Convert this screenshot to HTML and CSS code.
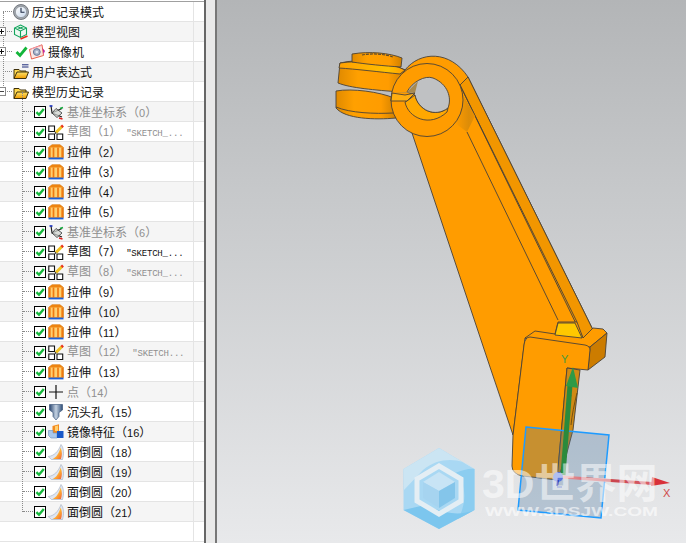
FILE: index.html
```html
<!DOCTYPE html>
<html lang="zh-CN">
<head>
<meta charset="utf-8">
<title>部件导航器</title>
<link rel="stylesheet" href="styles.css">
</head>
<body>
<svg class="defs" width="0" height="0" aria-hidden="true">
  <defs>
    <linearGradient id="gFolder" x1="0" y1="0" x2="0" y2="1"><stop offset="0" stop-color="#ffe468"/><stop offset="1" stop-color="#ee9a00"/></linearGradient>
    <linearGradient id="gHole" x1="0" y1="0" x2="1" y2="0"><stop offset="0" stop-color="#2a4670"/><stop offset=".5" stop-color="#c4d2e2"/><stop offset="1" stop-color="#2f4e78"/></linearGradient>
    <linearGradient id="gBlend" x1="0" y1="0" x2="1" y2="1"><stop offset="0" stop-color="#ffe98a"/><stop offset=".55" stop-color="#ffb030"/><stop offset="1" stop-color="#f0603a"/></linearGradient>
    <linearGradient id="gFace" x1="0" y1="0" x2="1" y2="1"><stop offset="0" stop-color="#fff"/><stop offset="1" stop-color="#c8d8ec"/></linearGradient>
    <symbol id="i-check" viewBox="0 0 12 12">
      <rect x=".5" y=".5" width="11" height="11" fill="#fff" stroke="#000"/>
      <path d="M2.400 6.200 5 8.800 9.800 3" fill="none" stroke="#16b83c" stroke-width="2.400"/>
    </symbol>
    <symbol id="i-clock" viewBox="0 0 16 16">
      <circle cx="8" cy="8" r="7.500" fill="#a4a9b0" stroke="#5d6268" stroke-width=".8"/>
      <circle cx="8" cy="8" r="5.600" fill="url(#gFace)" stroke="#7d848c" stroke-width=".6"/>
      <path d="M8 3.800V8.200H11.500" fill="none" stroke="#1d2a44" stroke-width="1.100"/>
    </symbol>
    <symbol id="i-view" viewBox="0 0 16 16">
      <path d="M7.500 1 13.500 4V10.500L7.500 13.500 1.500 10.500V4ZM1.500 4 7.500 7 13.500 4M7.500 7V13.500M4.500 2.500 10.500 5.500M10.500 2.500 4.500 5.500" fill="#eef9f2" stroke="#12a45c" stroke-width="1.100"/>
      <path d="M7.500 15 14.500 12" stroke="#e8301e" stroke-width="1.800"/>
    </symbol>
    <symbol id="i-tick" viewBox="0 0 13 13">
      <path d="M1.500 7 5 10.500 11.500 2.500" fill="none" stroke="#13b53a" stroke-width="2.800"/>
    </symbol>
    <symbol id="i-camera" viewBox="0 0 16 16">
      <path d="M.500 5.500 13 .800 14.500 11.500 2.500 15Z" fill="#fbe6e2" stroke="#e8604e"/>
      <path d="M2 5 12.500 1.500" stroke="#f0a0b0"/>
      <circle cx="7.800" cy="8" r="3.400" fill="#a8b2c8" stroke="#6a7898"/>
      <circle cx="7.800" cy="8" r="1.300" fill="#dfe6f0"/>
      <path d="M13.500 4 16 7 14.500 10Z" fill="#c0209a"/>
    </symbol>
    <symbol id="i-folder" viewBox="0 0 16 16">
      <path d="M1 14.500V4.500H6L7.500 6H13V8" fill="#ffd84c" stroke="#3e300a"/>
      <path d="M1 14.500 4 8H15.500L13 14.500Z" fill="url(#gFolder)" stroke="#3e300a"/>
    </symbol>
    <symbol id="i-folderx" viewBox="0 0 16 16">
      <path d="M9 .800H15.500M9 3H15.500" stroke="#1c2a7a"/>
      <path d="M1 14.500V5.500H6L7.500 7H13V8" fill="#ffd84c" stroke="#3e300a"/>
      <path d="M1 14.500 4 8H15.500L13 14.500Z" fill="url(#gFolder)" stroke="#3e300a"/>
    </symbol>
    <symbol id="i-csys" viewBox="0 0 16 16">
      <path d="M3 1.500 4 9 14 13M4 9 14 4.500" fill="none" stroke="#222" stroke-width="1.200"/>
      <path d="M4 9 8 4.500 14 9 9 13.500Z" fill="#cfd3cf" fill-opacity=".7" stroke="#333" stroke-width=".8"/>
      <path d="M1.500 2H4.500" stroke="#1830c8" stroke-width="1.500"/>
      <path d="M12 4.500 15 3.500" stroke="#14a83c" stroke-width="1.500"/>
      <path d="M11 14 14.500 15" stroke="#e0201c" stroke-width="1.500"/>
    </symbol>
    <symbol id="i-sketch" viewBox="0 0 16 16">
      <path d="M.800 2H6.500V7.500H.800ZM.800 10H6.500V15.500H.800ZM9 10H14.700V15.500H9Z" fill="#fff" stroke="#111" stroke-width="1.100"/>
      <path d="M8 8.500 14 2.500" stroke="#f0c020" stroke-width="3"/>
      <path d="M13.500 3 15 1.500" stroke="#e83020" stroke-width="2.600"/>
      <path d="M7 9.500 8 8.500" stroke="#222" stroke-width="1.500"/>
    </symbol>
    <symbol id="i-extrude" viewBox="0 0 16 16">
      <path d="M.500 3.500 4 .800H12L15.500 3.500V13.500H.500Z" fill="#ffd070" stroke="#c86400" stroke-width=".6"/>
      <path d="M.500 3.500 4 .800H12L15.500 3.500Z" fill="#ee8410"/>
      <path d="M1.800 3.500V13.500M5.500 3.500V13.500M10 3.500V13.500M14.200 3.500V13.500" stroke="#f07a10" stroke-width="1.700"/>
      <path d="M.500 14.500H15.500" stroke="#1c60d8" stroke-width="1.800"/>
    </symbol>
    <symbol id="i-point" viewBox="0 0 16 16">
      <path d="M1 8H15M8 1V15" stroke="#111" stroke-width="1.200"/>
    </symbol>
    <symbol id="i-hole" viewBox="0 0 16 16">
      <path d="M1.500 .500H14.500V6L11 8.500V12.500L8 16 5 12.500V8.500L1.500 6Z" fill="url(#gHole)" stroke="#2f4a70" stroke-width=".6"/>
    </symbol>
    <symbol id="i-mirror" viewBox="0 0 16 16">
      <path d="M4.500 2 11 .300V9H4.500Z" fill="#f48a1c"/>
      <path d="M7 2.200 10 1.400V7H7Z" fill="#ffd070"/>
      <path d="M.500 6.500H5V9H9V14H3L.500 11.500Z" fill="#a9c8ec" stroke="#6c90c0" stroke-width=".6"/>
      <path d="M9 7H15.500V14H9Z" fill="#1858c8"/>
    </symbol>
    <symbol id="i-blend" viewBox="0 0 16 16">
      <path d="M13 .500C16 4 16 10 14.500 15.500H3.500L.200 12.500C6 12 10.500 7.500 13 .500Z" fill="#dfe6f2" stroke="#a0aabc" stroke-width=".6"/>
      <path d="M12.500 3.500C14.500 8 14 11.500 13 15H4.500C8.500 13.500 11 9 12.500 3.500Z" fill="url(#gBlend)"/>
    </symbol>
  </defs>
</svg>

<div class="app">
  <aside class="tree">
    <div class="guide guide-root"></div>
    <div class="guide guide-child"></div>

    <div class="row lv0"><i class="stub"></i><svg class="ico"><use href="#i-clock"/></svg><span class="lbl">历史记录模式</span></div>
    <div class="row lv0 alt"><b class="box plus"></b><i class="stub"></i><svg class="ico"><use href="#i-view"/></svg><span class="lbl">模型视图</span></div>
    <div class="row lv0"><b class="box plus"></b><i class="stub"></i><svg class="tick"><use href="#i-tick"/></svg><svg class="ico"><use href="#i-camera"/></svg><span class="lbl">摄像机</span></div>
    <div class="row lv0 alt"><i class="stub"></i><svg class="ico"><use href="#i-folderx"/></svg><span class="lbl">用户表达式</span></div>
    <div class="row lv0"><b class="box"></b><i class="stub"></i><svg class="ico"><use href="#i-folder"/></svg><span class="lbl">模型历史记录</span></div>

    <div class="row lv1 alt off"><i class="stub"></i><svg class="chk"><use href="#i-check"/></svg><svg class="ico"><use href="#i-csys"/></svg><span class="lbl">基准坐标系（<span class="lat">0</span>）</span></div>
    <div class="row lv1 off"><i class="stub"></i><svg class="chk"><use href="#i-check"/></svg><svg class="ico"><use href="#i-sketch"/></svg><span class="lbl">草图（<span class="lat">1</span>）<span class="sk">"SKETCH_...</span></span></div>
    <div class="row lv1 alt"><i class="stub"></i><svg class="chk"><use href="#i-check"/></svg><svg class="ico"><use href="#i-extrude"/></svg><span class="lbl">拉伸（<span class="lat">2</span>）</span></div>
    <div class="row lv1"><i class="stub"></i><svg class="chk"><use href="#i-check"/></svg><svg class="ico"><use href="#i-extrude"/></svg><span class="lbl">拉伸（<span class="lat">3</span>）</span></div>
    <div class="row lv1 alt"><i class="stub"></i><svg class="chk"><use href="#i-check"/></svg><svg class="ico"><use href="#i-extrude"/></svg><span class="lbl">拉伸（<span class="lat">4</span>）</span></div>
    <div class="row lv1"><i class="stub"></i><svg class="chk"><use href="#i-check"/></svg><svg class="ico"><use href="#i-extrude"/></svg><span class="lbl">拉伸（<span class="lat">5</span>）</span></div>
    <div class="row lv1 alt off"><i class="stub"></i><svg class="chk"><use href="#i-check"/></svg><svg class="ico"><use href="#i-csys"/></svg><span class="lbl">基准坐标系（<span class="lat">6</span>）</span></div>
    <div class="row lv1"><i class="stub"></i><svg class="chk"><use href="#i-check"/></svg><svg class="ico"><use href="#i-sketch"/></svg><span class="lbl">草图（<span class="lat">7</span>）<span class="sk">"SKETCH_...</span></span></div>
    <div class="row lv1 alt off"><i class="stub"></i><svg class="chk"><use href="#i-check"/></svg><svg class="ico"><use href="#i-sketch"/></svg><span class="lbl">草图（<span class="lat">8</span>）<span class="sk">"SKETCH_...</span></span></div>
    <div class="row lv1"><i class="stub"></i><svg class="chk"><use href="#i-check"/></svg><svg class="ico"><use href="#i-extrude"/></svg><span class="lbl">拉伸（<span class="lat">9</span>）</span></div>
    <div class="row lv1 alt"><i class="stub"></i><svg class="chk"><use href="#i-check"/></svg><svg class="ico"><use href="#i-extrude"/></svg><span class="lbl">拉伸（<span class="lat">10</span>）</span></div>
    <div class="row lv1"><i class="stub"></i><svg class="chk"><use href="#i-check"/></svg><svg class="ico"><use href="#i-extrude"/></svg><span class="lbl">拉伸（<span class="lat">11</span>）</span></div>
    <div class="row lv1 alt off"><i class="stub"></i><svg class="chk"><use href="#i-check"/></svg><svg class="ico"><use href="#i-sketch"/></svg><span class="lbl">草图（<span class="lat">12</span>）<span class="sk">"SKETCH...</span></span></div>
    <div class="row lv1"><i class="stub"></i><svg class="chk"><use href="#i-check"/></svg><svg class="ico"><use href="#i-extrude"/></svg><span class="lbl">拉伸（<span class="lat">13</span>）</span></div>
    <div class="row lv1 alt off"><i class="stub"></i><svg class="chk"><use href="#i-check"/></svg><svg class="ico"><use href="#i-point"/></svg><span class="lbl">点（<span class="lat">14</span>）</span></div>
    <div class="row lv1"><i class="stub"></i><svg class="chk"><use href="#i-check"/></svg><svg class="ico"><use href="#i-hole"/></svg><span class="lbl">沉头孔（<span class="lat">15</span>）</span></div>
    <div class="row lv1 alt"><i class="stub"></i><svg class="chk"><use href="#i-check"/></svg><svg class="ico"><use href="#i-mirror"/></svg><span class="lbl">镜像特征（<span class="lat">16</span>）</span></div>
    <div class="row lv1"><i class="stub"></i><svg class="chk"><use href="#i-check"/></svg><svg class="ico"><use href="#i-blend"/></svg><span class="lbl">面倒圆（<span class="lat">18</span>）</span></div>
    <div class="row lv1 alt"><i class="stub"></i><svg class="chk"><use href="#i-check"/></svg><svg class="ico"><use href="#i-blend"/></svg><span class="lbl">面倒圆（<span class="lat">19</span>）</span></div>
    <div class="row lv1"><i class="stub"></i><svg class="chk"><use href="#i-check"/></svg><svg class="ico"><use href="#i-blend"/></svg><span class="lbl">面倒圆（<span class="lat">20</span>）</span></div>
    <div class="row lv1 alt"><i class="stub"></i><svg class="chk"><use href="#i-check"/></svg><svg class="ico"><use href="#i-blend"/></svg><span class="lbl">面倒圆（<span class="lat">21</span>）</span></div>
    <div class="row"></div>
  </aside>

  <div class="sash"></div>

  <main class="view">
    <svg class="scene" viewBox="217 0 469 543" width="469" height="543">
      <defs>
        <linearGradient id="gLug" x1="0" y1="0" x2="1" y2="0"><stop offset="0" stop-color="#e08a00"/><stop offset=".3" stop-color="#ffa000"/><stop offset=".75" stop-color="#ff9c00"/><stop offset="1" stop-color="#d08000"/></linearGradient>
        <linearGradient id="gLugTop" x1="0" y1="0" x2="1" y2="0"><stop offset="0" stop-color="#ffa000"/><stop offset=".75" stop-color="#ffc000"/><stop offset="1" stop-color="#ff9c00"/></linearGradient>
        <linearGradient id="gFillet" x1="0" y1="0" x2="1" y2="0"><stop offset="0" stop-color="#ff9c00"/><stop offset=".7" stop-color="#dc8c08"/><stop offset="1" stop-color="#ec9000"/></linearGradient>
        <linearGradient id="gShaft" x1="0" y1="0" x2="1" y2="0"><stop offset="0" stop-color="#e8a0a4"/><stop offset=".5" stop-color="#c8404a"/><stop offset="1" stop-color="#d8606a"/></linearGradient>
      </defs>

      <g stroke="#4a4238" stroke-width=".9" stroke-linejoin="round">
        <!-- lower lug -->
        <path d="M336 91C352 88 380 92 394 98L396 118C375 120 345 119 336 108Z" fill="url(#gLug)"/>
        <path d="M336 107C350 113 375 114 393 113" fill="none"/>
        <!-- upper lug -->
        <path d="M340 63C360 58 390 62 405 70L400 92C375 90 350 88 338 83Z" fill="url(#gLug)"/>
        <path d="M340 63C360 60 390 62 405 70L400 74C380 72 355 69 339 68Z" fill="url(#gLugTop)"/>
        <!-- cap -->
        <path d="M352 54C370 51 390 53 402 58L401 67C385 66 365 64 352 62Z" fill="url(#gLug)"/>
        <path d="M362 55C372 53 385 54 393 57" fill="none" stroke="#5a4a30" stroke-width="1.200" stroke-dasharray="3 1"/>

        <!-- arm -->
        <path d="M405 70C420 51 450 50 468 77L594 332 590 347 525 338 513 435 490 367 412 133 391 100Z" fill="#ff9c00"/>
        <path d="M460 85 468 77 594 332 583 338Z" fill="#f29600"/>
        <path d="M467 132 558 320" fill="none"/>
        <path d="M460 85 577 322" fill="none"/>
        <path d="M462 93 475 116 467 132 455 123Z" fill="url(#gFillet)" stroke="none"/>

        <!-- ring -->
        <ellipse cx="427" cy="100" rx="36" ry="36.500" fill="#ff9c00"/>
        <path d="M405 102C408 118 430 128 447 112L448 108C435 118 418 110 415 95L407 101Z" fill="#ffa800"/>
        <path d="M415 95C418 110 435 118 448 108C452 98 448 84 433 78C425 75 412 82 407 92Z" fill="#bfc1c3"/>
        <path d="M392 92 407 92 418 81 415 93 392 92Z" fill="#a88a50" stroke="none"/>
        <path d="M392 93 405 95 415 93 407 101 391 101Z" fill="#ffae10"/>

        <!-- bracket -->
        <path d="M535 331 555 334 558 322 577 322 583 338 593 328 603 329 607 333 590 347 525 338Z" fill="#ff9c00"/>
        <path d="M558 323 575 323 582 338 555 335Z" fill="#ffc800"/>
        <path d="M590 347 607 333 605 357 588 370Z" fill="#cc7c00"/>
        <path d="M530 337 585 345Q590 346 590 350L588 370 567 368 557 480 523 476Q512 474 512 466L513 435 524 345Q525 337 530 337Z" fill="#ff9c00"/>
        <path d="M567 368 580 370 573 430 565 460 557 480Z" fill="#d08a14"/>
        <path d="M571 395C567 410 566 425 566 440M577 393C574 405 572 415 571 425" fill="none" stroke="#6a4a10"/>
      </g>

      <!-- watermark logo -->
      <g>
        <path d="M439 448 474.500 469V510L439 529 403.500 510V469Z" fill="#a9d8f3"/>
        <path d="M403.500 469 439 448 474.500 469C462 458 440 456 423 470L404 490Z" fill="#cbe5f3"/>
        <path d="M474.500 469V510L458 519C466 505 468 485 455 473 463 470 470 468 474.500 469Z" fill="#8ccdf0"/>
        <path d="M403.500 510 439 529 474.500 510C460 516 445 514 425 505Z" fill="#7cc6ee"/>
        <path d="M439 466 461 479V501L439 514 417 501V479Z" fill="none" stroke="#e4eef4" stroke-width="5"/>
        <path d="M439 472 455 482 439 491 423 482Z" fill="#c8e4f5"/>
        <path d="M423 482 439 491V508L423 498Z" fill="#a6d4f0"/>
        <path d="M455 482 439 491V508L455 498Z" fill="#84c5ea"/>
      </g>

      <!-- datum plane -->
      <path class="plane" d="M526 427 609 435 601 518 518 510Z"/>

      <!-- triad -->
      <path d="M563 475 570 385" stroke="#2a8a3c" stroke-width="5"/>
      <path d="M573 367 578 388 566 386Z" fill="#2e9a46"/>
      <path d="M562 477 652 483.500" stroke="url(#gShaft)" stroke-width="3"/>
      <path d="M652 477 670 483 651 486Z" fill="#d8303a"/>
      <circle cx="558" cy="477" r="5" fill="#5878e0"/>
      <path d="M558 480 557 486" stroke="#1c40c0" stroke-width="2"/>
      <path d="M557 487H562" stroke="#1c40c0"/>
      <text class="axis ax-y" x="561" y="363">Y</text>
      <text class="axis ax-x" x="663" y="497">X</text>

      <!-- watermark text -->
      <text class="wm" x="482" y="498">3D世界网</text>
      <text class="wm-url" x="485" y="516" textLength="173" lengthAdjust="spacingAndGlyphs">WWW.3DSJW.COM</text>
    </svg>
  </main>
</div>
</body>
</html>
```

FILE: styles.css
```css
* { box-sizing: border-box; }

html, body {
  margin: 0;
  height: 100%;
  overflow: hidden;
  background: #fff;
}

.defs { position: absolute; }

.app {
  display: flex;
  width: 686px;
  height: 543px;
}

/* tree panel */
.tree {
  position: relative;
  width: 204px;
  height: 542px;
  margin-top: 1px;
  flex: none;
  overflow: hidden;
  background: #fff;
  border-top: 1px solid #a0a0a0;
  font: 12px/19px "Noto Sans CJK SC", "Liberation Sans", sans-serif;
  color: #111;
}

.row {
  position: relative;
  display: flex;
  align-items: center;
  height: 20px;
  border-bottom: 1px solid #e4e4e4;
  white-space: nowrap;
  background: linear-gradient(#e4e4e4, #e4e4e4) 193px 0 / 1px 100% no-repeat #fff;
}
.row.alt { background-color: #f5f5f5; }
.row.off { color: #8f8f8f; }

.lv0 { padding-left: 13px; }
.lv1 { padding-left: 34px; }
.lv1 .lbl { margin-top: 2px; }

.ico { width: 16px; height: 16px; flex: none; margin-right: 3px; }
.lv1 .ico { margin-left: 2px; }
.chk { width: 12px; height: 12px; flex: none; }
.tick { width: 13px; height: 13px; flex: none; margin: 0 1px 0 2px; }

.lat { font: 11px/19px "Liberation Sans", sans-serif; }
.sk { font: 9px/19px "Liberation Mono", monospace; margin-left: 5px; letter-spacing: -.2px; }

/* tree connectors lie over the rows */
.guide {
  position: absolute;
  z-index: 1;
  width: 0;
  border-left: 1px dotted #8a8a8a;
}
.guide-root { left: 3px; top: 10px; height: 76px; }
.guide-child { left: 22px; top: 90px; height: 420px; }

.stub {
  position: absolute;
  top: 9px;
  height: 0;
  border-top: 1px dotted #8a8a8a;
}
.lv0 .stub { left: 3px; width: 9px; }
.lv1 .stub { left: 23px; width: 10px; }

.box {
  position: absolute;
  z-index: 2;
  left: -3px;
  top: 5px;
  width: 9px;
  height: 9px;
  background: linear-gradient(#444, #444) 1px 3px / 5px 1px no-repeat #fff;
  border: 1px solid #8a8a8a;
}
.box.plus {
  background:
    linear-gradient(#111, #111) 1px 3px / 5px 1px no-repeat,
    linear-gradient(#111, #111) 3px 1px / 1px 5px no-repeat,
    #fff;
}

/* splitter between tree and graphics window */
.sash {
  width: 13px;
  flex: none;
  background: #e9e9e9;
  border-left: 2px solid #666;
  border-right: 2px solid #777;
}

/* graphics window */
.view {
  flex: 1;
  min-width: 0;
  background: linear-gradient(#b3b5b7, #c6c8ca 35%, #e8e9eb);
}
.scene { display: block; }

.plane {
  fill: rgba(70, 115, 160, .3);
  stroke: #1e9bff;
  stroke-width: 1.5;
}

.axis { font: 11px "Liberation Sans", sans-serif; }
.ax-y { fill: #4a9a3c; }
.ax-x { fill: #d04a4a; }

.wm {
  font: 700 41px "Liberation Sans", "Noto Sans CJK SC", sans-serif;
  fill: rgba(255, 255, 255, .55);
}
.wm-url {
  font: 700 12px "Liberation Sans", sans-serif;
  fill: rgba(255, 255, 255, .6);
}
```
